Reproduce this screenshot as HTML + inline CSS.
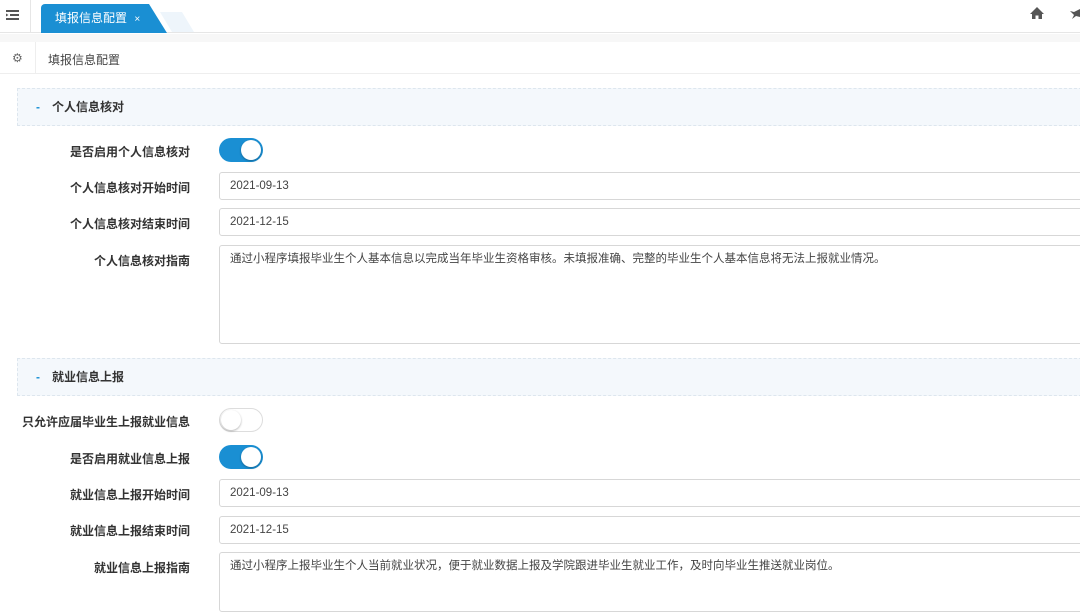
<!DOCTYPE html>
<html><head><meta charset="utf-8"><style>
*{box-sizing:border-box;margin:0;padding:0}
body{width:1080px;height:590px;overflow:hidden;background:#fff;font-family:"Liberation Sans","Noto Sans CJK SC",sans-serif;font-size:11.5px;color:#333;position:relative}
.abs{position:absolute}
.top{left:0;top:0;width:1080px;height:33px;border-bottom:1px solid #e6e6e6;background:#fff}
.strip{left:0;top:34px;width:1080px;height:8px;background:#f7f7f7}
.tab{left:41px;top:4px;width:126px;height:29px;background:#1a8fd3;clip-path:polygon(0 0,108px 0,126px 100%,0 100%);border-radius:4px 0 0 0;color:#fff;font-size:12px;line-height:29px;padding-left:14px}
.label{width:190px;text-align:right;font-weight:bold;font-size:12px;color:#333}
.inp{left:219px;width:880px;height:28px;border:1px solid #d7d7d7;border-radius:3px;padding-left:10px;line-height:26px;color:#444;font-size:11.5px}
.sec{left:17px;width:1080px;height:38px;background:#f4f8fc;border:1px dashed #dde6ee;line-height:36px;font-weight:bold;padding-left:18px;font-size:12px}
.sec b{color:#1a8fd3;margin-right:12px}
.tg{left:219px;width:44px;height:24px;border-radius:12px}
.tg.on{background:#1a8fd3}
.tg.off{background:#fff;border:1px solid #ddd}
.knob{position:absolute;top:2px;width:20px;height:20px;border-radius:50%;background:#fff;box-shadow:0 1px 2px rgba(0,0,0,.3)}
</style></head><body>
<div class="abs top"></div>
<div class="abs" style="left:0;top:0;width:31px;height:33px;border-right:1px solid #e6e6e6"></div>
<svg class="abs" style="left:6px;top:10px" width="13" height="11"><rect x="0" y="0" width="13" height="2" fill="#555"/><rect x="4" y="4" width="9" height="2" fill="#555"/><rect x="0" y="8" width="13" height="2" fill="#555"/><path d="M0 3.5 L2.5 5 L0 6.5Z" fill="#555"/></svg>
<div class="abs tab">填报信息配置 <span style="font-size:10px;margin-left:4px">×</span></div>
<div class="abs" style="left:160px;top:12px;width:34px;height:20px;background:#eef5fb;clip-path:polygon(0 0,22px 0,34px 100%,12px 100%)"></div>
<svg class="abs" style="left:1029px;top:6px" width="16" height="14"><path d="M8 1 L15 8 L13 8 L13 13 L9.5 13 L9.5 9.5 L6.5 9.5 L6.5 13 L3 13 L3 8 L1 8Z" fill="#555"/></svg>
<svg class="abs" style="left:1068px;top:6px" width="12" height="14"><path d="M12 3 L6 6 L2 5 L6 9 L4 13 L8 10 L12 11Z" fill="#555"/></svg>
<div class="abs strip"></div>
<div class="abs" style="left:0;top:42px;width:1080px;height:32px;border-bottom:1px solid #eee"></div>
<div class="abs" style="left:35px;top:42px;width:1px;height:32px;background:#eee"></div>
<div class="abs" style="left:12px;top:51px;color:#666;font-size:12px">⚙</div>
<div class="abs" style="left:48px;top:51px;font-size:12px;color:#444">填报信息配置</div>

<div class="abs sec" style="top:88px"><b>-</b>个人信息核对</div>
<div class="abs label" style="top:143px">是否启用个人信息核对</div>
<div class="abs tg on" style="top:138px"><div class="knob" style="left:22px"></div></div>
<div class="abs label" style="top:179px">个人信息核对开始时间</div>
<div class="abs inp" style="top:172px">2021-09-13</div>
<div class="abs label" style="top:215px">个人信息核对结束时间</div>
<div class="abs inp" style="top:208px">2021-12-15</div>
<div class="abs label" style="top:252px">个人信息核对指南</div>
<div class="abs inp" style="top:245px;height:99px">通过小程序填报毕业生个人基本信息以完成当年毕业生资格审核。未填报准确、完整的毕业生个人基本信息将无法上报就业情况。</div>

<div class="abs sec" style="top:358px"><b>-</b>就业信息上报</div>
<div class="abs label" style="top:413px">只允许应届毕业生上报就业信息</div>
<div class="abs tg off" style="top:408px"><div class="knob" style="left:1px;top:1px"></div></div>
<div class="abs label" style="top:450px">是否启用就业信息上报</div>
<div class="abs tg on" style="top:445px"><div class="knob" style="left:22px"></div></div>
<div class="abs label" style="top:486px">就业信息上报开始时间</div>
<div class="abs inp" style="top:479px">2021-09-13</div>
<div class="abs label" style="top:522px">就业信息上报结束时间</div>
<div class="abs inp" style="top:516px">2021-12-15</div>
<div class="abs label" style="top:559px">就业信息上报指南</div>
<div class="abs inp" style="top:552px;height:60px">通过小程序上报毕业生个人当前就业状况，便于就业数据上报及学院跟进毕业生就业工作，及时向毕业生推送就业岗位。</div>
</body></html>
